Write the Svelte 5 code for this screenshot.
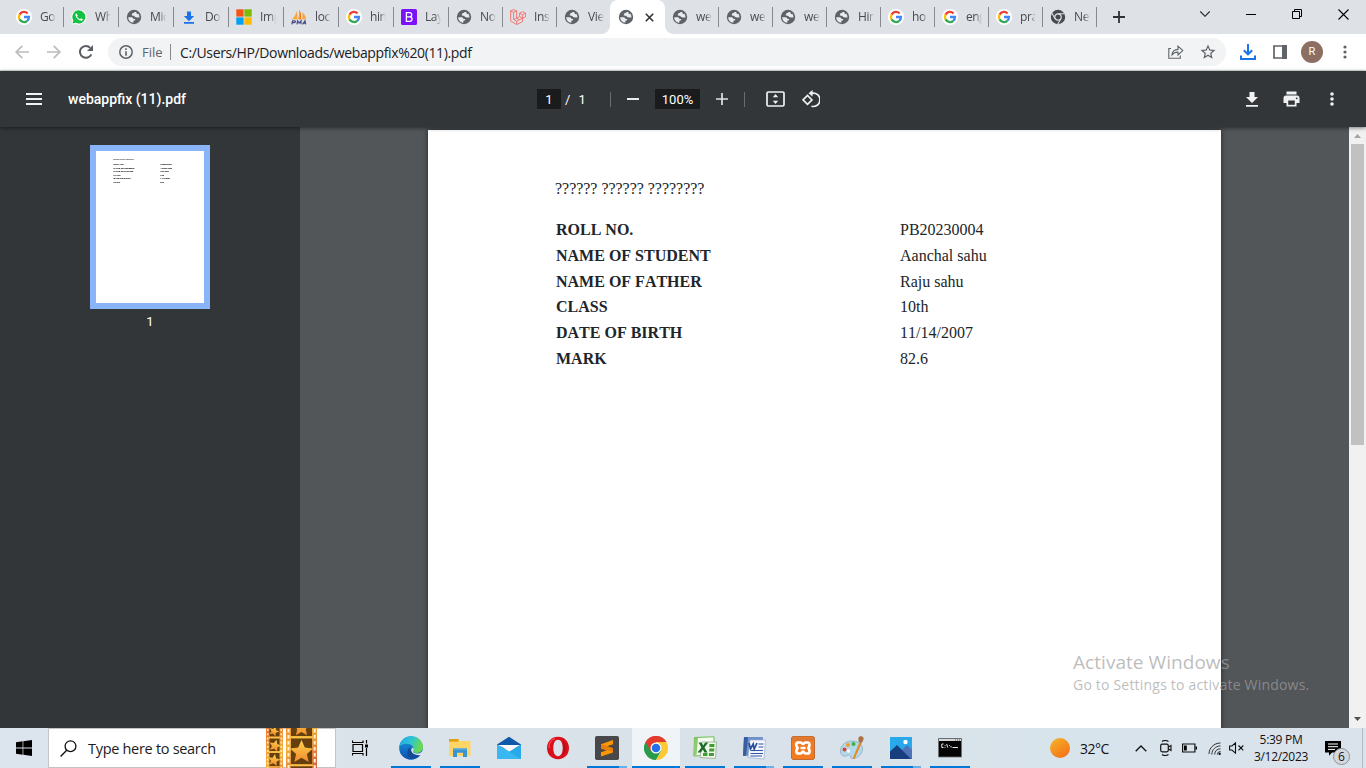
<script>
  const tabs = [
    { icon: 'google', label: 'Go', w: 55 },
    { icon: 'whatsapp', label: 'Wha', w: 55 },
    { icon: 'globe', label: 'Mic', w: 55 },
    { icon: 'download', label: 'Do', w: 55 },
    { icon: 'microsoft', label: 'Imp', w: 55 },
    { icon: 'pma', label: 'loc', w: 55 },
    { icon: 'google', label: 'hin', w: 55 },
    { icon: 'bootstrap', label: 'Lay', w: 55 },
    { icon: 'globe', label: 'No', w: 54 },
    { icon: 'laravel', label: 'Ins', w: 54 },
    { icon: 'globe', label: 'Vie', w: 54 },
    { icon: 'globe', label: '', w: 54, active: true },
    { icon: 'globe', label: 'we', w: 54 },
    { icon: 'globe', label: 'we', w: 54 },
    { icon: 'globe', label: 'we', w: 54 },
    { icon: 'globe', label: 'Hin', w: 54 },
    { icon: 'google', label: 'ho', w: 54 },
    { icon: 'google', label: 'eng', w: 54 },
    { icon: 'google', label: 'pra', w: 54 },
    { icon: 'chrome', label: 'Ne', w: 54 },
  ];
  const rows = [
    ['ROLL NO.', 'PB20230004'],
    ['NAME OF STUDENT', 'Aanchal sahu'],
    ['NAME OF FATHER', 'Raju sahu'],
    ['CLASS', '10th'],
    ['DATE OF BIRTH', '11/14/2007'],
    ['MARK', '82.6'],
  ];
  const apps = [
    { id: 'edge', bar: 1 },
    { id: 'explorer', bar: 1 },
    { id: 'mail', bar: 0 },
    { id: 'opera', bar: 0 },
    { id: 'sublime', bar: 2 },
    { id: 'chromeapp', bar: 1, active: true },
    { id: 'excel', bar: 1 },
    { id: 'word', bar: 2 },
    { id: 'xampp', bar: 1 },
    { id: 'paint', bar: 1 },
    { id: 'photos', bar: 2 },
    { id: 'cmd', bar: 1 },
  ];
</script>

{#snippet favicon(id)}
  <svg class="fav" viewBox="0 0 16 16">
    {#if id === 'google'}
      <circle cx="8" cy="8" r="8" fill="#fff" />
      <g fill="none" stroke-width="2.3">
        <path d="M3.55 5.6A5 5 0 0 1 11.6 4.5" stroke="#ea4335" />
        <path d="M3.55 5.6a5 5 0 0 0 0 4.8" stroke="#fbbc05" />
        <path d="M3.55 10.4a5 5 0 0 0 7.7 1.4" stroke="#34a853" />
        <path d="M8 8h5a5 5 0 0 1-1.75 3.8" stroke="#4285f4" />
      </g>
    {:else if id === 'whatsapp'}
      <path d="M8 .4a7.6 7.6 0 0 0-6.7 11.2L.4 15.8l4.3-1A7.6 7.6 0 1 0 8 .4z" fill="#fff" />
      <path d="M8 1.3a6.6 6.6 0 0 0-5.7 10l-.8 3.3 3.4-.8A6.6 6.6 0 1 0 8 1.3z" fill="#12c143" />
      <path d="M5.4 4.2c-.9.3-1.2 1.4-.8 2.5.9 2.4 2.7 4.2 4.9 4.9 1.2.3 2.3-.2 2.4-1.4l-1.9-1-.9 1C7.700 9.700 6.600 8.700 6 7.300l.8-.9z" fill="#fff" />
    {:else if id === 'globe'}
      <circle cx="8" cy="8" r="7.2" fill="#5f6368" />
      <path d="M2.200 8.300h3c1.200 0 2 .6 2.300 1.600h1.700c.1 1.100-.6 1.500-1.300 1.700-.6.200-.5 1.200-.6 2.200C4.400 13.600 2.200 11.200 2.200 8.300z" fill="#e8eaed" />
      <path d="M10.200 3.100H8.600c-.3.900-1 .9-1.700 1-.8.200-.5 1.200-1.200 1.700 0 .9.900 1 1.900 1 1.100 0 1.200 1.300 2.200 1.500 1.200.200 2.200.1 3.700.3a6 6 0 0 0-1.300-4.100c-.4.700-1.200.8-1.500 0z" fill="#e8eaed" />
    {:else if id === 'download'}
      <path d="M6 2.500h4V7h3.200L8 12.200 2.800 7H6zM3 13h10v1.700H3z" fill="#1a73e8" />
    {:else if id === 'microsoft'}
      <path d="M.3.300h7.300v7.300H.3z" fill="#f65314" /><path d="M8.400.300h7.300v7.300H8.400z" fill="#7cbb00" />
      <path d="M.3 8.400h7.300v7.300H.3z" fill="#00a1f1" /><path d="M8.400 8.400h7.300v7.300H8.400z" fill="#ffbb00" />
    {:else if id === 'pma'}
      <path d="M5.500 2C5.200 5 3.500 8 .8 10.200h5c.8-2.700.7-5.500-.3-8.200zM8 .8c2 3 2.600 6.300 1.800 9.400H7C8 7 8.300 4 8 .8zM11 3c2.300 2 3.700 4.500 4 7.200h-4C11.700 7.700 11.700 5.300 11 3z" fill="#f9a33a" />
      <path d="M8 .8c2 3 2.600 6.300 1.800 9.400H8.400C9.200 7 9 4 8 .8z" fill="#ef7a18" />
      <path d="M.8 15.300l.8-3.500h2c1.300 0 1.100 1.900-.3 1.900H1.400M6 15.300l.6-3.500 1.500 2.300 2-2.300-.2 3.500M11.500 15.300l2.500-3.500.7 3.500M12.300 14.200h2" stroke="#4a4b86" stroke-width="1.200" fill="none" />
    {:else if id === 'bootstrap'}
      <rect width="16" height="16" rx="1.500" fill="#7b12f8" />
      <path d="M5.400 3.700h3.300c2.600 0 2.700 3.900.1 4.100 3.100.1 2.900 4.500-.1 4.500H5.400zM5.400 7.800h3.400" stroke="#fff" stroke-width="1.300" fill="none" />
    {:else if id === 'laravel'}
      <path d="M.6 1.800l3-1.200 3 1.300v7.300l3-1.700V4.200l3-1.500 3 1.500v3.600l-3 1.500v3.300L6.700 15.500l-6-3.400zM.6 1.800l3 1.500v7.200l3 1.700 6-3M3.600 3.300l3-1.400M9.600 4.200l3 1.600 3-1.600M12.600 5.800v3.500l-3-1.800M6.600 9.200l-3 1.400M6.700 15.500v-3.300M6.600 9.200l3.200 1.500" stroke="#f8625b" stroke-width=".8" fill="none" />
    {:else if id === 'chrome'}
      <circle cx="8" cy="8" r="7.200" fill="#46494e" />
      <circle cx="8" cy="8" r="3.200" fill="#46494e" stroke="#dee1e6" stroke-width="1.200" />
      <path d="M8 4.700h6.300M5.100 9.700L2 4.300M10.900 9.700l-3.200 5.500" stroke="#dee1e6" stroke-width="1.100" />
    {/if}
  </svg>
{/snippet}

{#snippet appicon(id)}
  <svg class="app-icon" viewBox="0 0 24 24">
    {#if id === 'edge'}
      <defs>
        <linearGradient id="eg1" x1="0" y1="0" x2="1" y2=".3"><stop offset="0" stop-color="#20a5e2" /><stop offset=".5" stop-color="#2cc3d8" /><stop offset="1" stop-color="#6bd94f" /></linearGradient>
        <linearGradient id="eg2" x1="0" y1="0" x2="0" y2="1"><stop offset="0" stop-color="#1b9de0" /><stop offset="1" stop-color="#0a4fae" /></linearGradient>
      </defs>
      <circle cx="12" cy="12" r="11.800" fill="url(#eg2)" />
      <path d="M.5 10.500C1.500 4 6.500.2 12 .2c7 0 12 5 12 10.500 0 4-3 6.300-6.500 6.300-3 0-4.200-1-3.600-2.200 1.100-1.300 1-3.300-.2-4.600C10.800 7 4 7 .5 10.500z" fill="url(#eg1)" />
      <path d="M13.700 15c-.9 1.700 1.300 3.100 4.200 3 1.800-.1 3.400-.9 4.600-1.500l-.6 1.300C19 23 12 24 9.500 20.500 7 17 9 12.500 12 10.300c-2 3 .2 4.900 1.700 4.700z" fill="#134b96" />
      <path d="M14 11.500c1.500 1.500.5 3.200-.2 4 0 1.500 3 2.200 5 1.900 2.500-.3 4-1.400 5-3l.2 4c-3 1.600-8.700 1-10.900-1.800-1.500-2-1.100-4 .9-5.100z" fill="#dce5ec" />
    {:else if id === 'explorer'}
      <path d="M1 3h9.500l1.500 2H22.500v15H1z" fill="#ffd567" /><path d="M1 3h9.500v2.700H1z" fill="#dda113" />
      <path d="M5 21v-8.500h14V21h-4v-4.200H9V21z" fill="#3a94d2" /><path d="M5 12.500h14v1.500H5z" fill="#4faae4" />
    {:else if id === 'mail'}
      <path d="M0 8.500L12 .8l12 7.700v4H0z" fill="#0f5aa8" />
      <path d="M0 8.500l12 7.300 12-7.300V23H0z" fill="#27a9ea" /><path d="M0 23V8.500L24 23z" fill="#38b7f0" /><path d="M1 9h22L13 15z" fill="#fafafa" />
    {:else if id === 'opera'}
      <path fill-rule="evenodd" d="M12 .8C5.600.8 1 5.500 1 12s4.600 11.200 11 11.200S23 18.500 23 12 18.400.8 12 .8zm0 3c3 0 4.700 3.400 4.700 8.200S15 20.200 12 20.200 7.300 16.800 7.300 12 9 3.800 12 3.800z" fill="#d9101c" />
      <path d="M16 4.500c2.800 3 2.800 12 0 15 4.300-2.300 5-11.500 0-15z" fill="#ad0915" />
      <path d="M3 12c0-5 2.700-8.700 6-9.500" stroke="#ff3f48" stroke-width="1.500" fill="none" />
    {:else if id === 'sublime'}
      <rect width="24" height="24" rx="1.800" fill="#48484a" /><path d="M6 8.300L18 4v4.300l-12 4zM6 8.300l12 3.900v4.300L6 12.500zM6 16.300l12-4v4.200L6 20.600z" fill="#ff9800" /><path d="M6 8.300l12 3.900v3.500L6 12.300z" fill="#e87d08" />
    {:else if id === 'chromeapp'}
      <path d="M1.600 6l5.200 9L12 6h10.400A12 12 0 0 0 1.600 6z" fill="#e33b2e" /><path d="M12 12L1.600 6A12 12 0 0 0 12 24l5.200-9z" fill="#2a9a4b" /><path d="M12 12l5.200 3L12 24A12 12 0 0 0 22.400 6H12z" fill="#fcc934" />
      <path d="M1.600 6l5.200 9L12 6h10.400A12 12 0 0 0 1.600 6z" fill="#e33b2e" /><circle cx="12" cy="12" r="5.500" fill="#fff" /><circle cx="12" cy="12" r="4.300" fill="#2370e8" />
    {:else if id === 'excel'}
      <path d="M1.500 1.500L21 .800v18L.8 20z" fill="#f4faf1" stroke="#6fbf4c" /><path d="M9 6h14.500l-1 16.500L7 21.500z" fill="#eef6ea" stroke="#83a978" stroke-width=".7" />
      <path d="M16.500 8h5l-.2 3h-5zM16.300 12.500h5l-.2 3h-5zM16 17h5l-.2 3h-5zM10 17h4.500l-.2 3H10z" fill="#439b35" /><path d="M2 2l3 0-1.500 17H1z" fill="#8cca6c" />
      <path d="M5.500 6.500h3l1.700 2.900 2-2.900h3L11.500 11.500l3 5h-3l-1.600-3-2.200 3H4.500l4-5z" fill="#1b6c28" />
    {:else if id === 'word'}
      <path d="M2 1l19 0-2 19H1z" fill="#6f90c8" /><path d="M2 1l4 .2-2 18.500H1z" fill="#355d9f" /><path d="M8 4h15.500L22 23 6 21.500z" fill="#f5f7fc" stroke="#98add0" stroke-width=".7" />
      <path d="M16.500 8h5M16.500 11h4.800M9 14.500h12M8.500 17.500H21M8.300 20H20" stroke="#2d55a6" stroke-width="1.200" /><path d="M7 7l1.500 6 2.700-5 1 5L15 7" stroke="#254e9b" stroke-width="1.700" fill="none" />
    {:else if id === 'xampp'}
      <rect x=".4" y=".4" width="23.200" height="23.200" rx="2.500" fill="#f47a20" stroke="#bc662f" /><path d="M1 2h22v3H1z" fill="#c97643" opacity=".6" />
      <path d="M6.500 6.500h2.800c1.500 0 1.800 1.500 2.700 1.500s1.200-1.500 2.700-1.500h1.800c2.500 0 2.500 3.500.8 5.500 2 2 1.700 5.500-.8 5.500h-1.800c-1.500 0-1.800-1.800-2.700-1.800s-1.200 1.800-2.700 1.800H7.500C5 17.500 4.700 14 6.700 12 5 10 4.500 7.500 6.500 6.500z" fill="none" stroke="#fff" stroke-width="2.700" stroke-linejoin="round" /><path d="M9.500 12h5" stroke="#fff" stroke-width="2.400" />
    {:else if id === 'paint'}
      <path d="M12 5C5 5 0 10 .5 15.500.8 20 4.500 21 7 19.500c2-1.200 4 0 3.500 1.800C10 24 22 22.500 22.500 13 22.700 8 18 5 12 5z" fill="#b4d8ea" stroke="#82a7bd" stroke-width=".7" />
      <circle cx="4.500" cy="13.500" r="2" fill="#d8452f" /><circle cx="8" cy="9" r="2" fill="#f0a020" /><circle cx="13.500" cy="8" r="2" fill="#3faf45" /><circle cx="8.500" cy="15" r="1.700" fill="#f5f9fb" />
      <path d="M20 5l2 1.500L14.500 23l-2-.3z" fill="#e58a28" /><path d="M18.500 1.500c1-1.500 4.500-1.700 5 .5.5 2-1 4-2.500 5l-2.500-1.500z" fill="#a87347" />
    {:else if id === 'photos'}
      <path d="M1 1h22v22H1z" fill="#29a8ea" /><path d="M12 15l6-6 5 5v9H12z" fill="#4f72b8" /><path d="M1 15.500L8 9l14 14H1z" fill="#173f7e" /><circle cx="16.500" cy="6" r="2.200" fill="#fff" />
    {:else if id === 'cmd'}
      <path d="M.5 2.500h23v18.500H.5z" fill="#050505" stroke="#6d6f70" stroke-width=".8" /><path d="M1 3h22v2H1z" fill="#d4d6d7" /><path d="M17 4h1M19 4h1M21 4h1" stroke="#555" stroke-width="1.200" />
      <path d="M5.500 8H3.800v3.500h1.700M7 9v.8M7 11v.8M8.700 8l1 3.500M11.500 9v.8M13 10v1.500M14.500 11.500H20" stroke="#e8e8e8" fill="none" />
    {/if}
  </svg>
{/snippet}

{#snippet sheet()}
  <div class="sheet">
    <p class="heading">?????? ?????? ????????</p>
    <dl>
      {#each rows as [key, value]}
        <dt>{key}</dt>
        <dd>{value}</dd>
      {/each}
    </dl>
  </div>
{/snippet}

<div class="screen">
  <header class="tabstrip">
    {#each tabs as tab}
      <div class="tab" class:active={tab.active} style="width: {tab.w}px">
        {@render favicon(tab.icon)}
        {#if tab.active}
          <svg class="tab-close" viewBox="0 0 9 9"><path d="M.8.8l7.400 7.400M8.200.8L.8 8.200" stroke="#303236" stroke-width="1.600" /></svg>
        {:else}
          <span class="tab-label">{tab.label}</span>
        {/if}
      </div>
    {/each}
    <svg class="plus-tab" viewBox="0 0 12 12"><path d="M6 0v12M0 6h12" stroke="#303236" stroke-width="1.800" /></svg>
    <div class="window-controls">
      <svg width="10" height="6" viewBox="0 0 10 6"><path d="M.3.500L5 5.300 9.700.500" stroke="#222" stroke-width="1.100" fill="none" /></svg>
      <svg width="10" height="10" viewBox="0 0 10 10"><path d="M0 5.500h10" stroke="#000" /></svg>
      <svg width="10" height="10" viewBox="0 0 10 10"><path d="M.5 2.500h7v7h-7zM2.500 2.500v-2h7v7h-2" stroke="#000" fill="none" /></svg>
      <svg width="11" height="11" viewBox="0 0 11 11"><path d="M.5.500l10 10M10.500.500l-10 10" stroke="#000" stroke-width="1.100" /></svg>
    </div>
  </header>

  <nav class="navbar">
    <svg class="nav-back" viewBox="0 0 14 14"><path d="M14 7H1.200M7.300.800L1.200 7l6.100 6.200" stroke="#babcbe" stroke-width="1.700" fill="none" /></svg>
    <svg class="nav-fwd" viewBox="0 0 14 14"><path d="M0 7h12.800M6.700.800L12.800 7l-6.100 6.200" stroke="#babcbe" stroke-width="1.700" fill="none" /></svg>
    <svg class="nav-reload" viewBox="0 0 14 14"><path d="M12.300 9.300A5.900 5.900 0 1 1 11.200 2.900" stroke="#5a5d61" stroke-width="2" fill="none" /><path d="M14 0v6H8z" fill="#5a5d61" /></svg>
    <div class="omnibox">
      <svg class="info" viewBox="0 0 14 14"><circle cx="7" cy="7" r="6.200" stroke="#5f6368" stroke-width="1.500" fill="none" /><path d="M7 3.300v1.600M7 6.200v4.500" stroke="#5f6368" stroke-width="1.600" /></svg>
      <span class="scheme">File</span>
      <span class="rule"></span>
      <span class="url">C:/Users/HP/Downloads/webappfix%20(11).pdf</span>
      <svg class="share" viewBox="0 0 16 14"><path d="M3 3.500H.8v9.700h11.500V10.500M4 9.800c.3-3.500 2.500-5.200 6-5.400V1.200L14.800 5.600 10 10V7.100C7.500 7.100 5.500 7.800 4 9.800z" stroke="#5f6368" stroke-width="1.100" fill="none" /></svg>
      <svg class="star" viewBox="0 0 24 24"><path d="M22 9.240l-7.190-.620L12 2 9.190 8.630 2 9.240l5.460 4.730L5.820 21 12 17.270 18.180 21l-1.630-7.030L22 9.240zM12 15.400l-3.760 2.270 1-4.280-3.320-2.880 4.380-.380L12 6.100l1.710 4.040 4.380.380-3.320 2.880 1 4.280L12 15.400z" fill="#5f6368" /></svg>
    </div>
    <svg class="dl" viewBox="0 0 16 16"><path d="M8 0v10M3.800 6.200L8 10.300l4.200-4.100M1 11.500V15h14v-3.500" stroke="#1a73e8" stroke-width="2" fill="none" /></svg>
    <svg class="panel" viewBox="0 0 14 14"><path d="M1 1h12v12H1z" stroke="#5f6368" stroke-width="1.700" fill="none" /><path d="M9 0h5v14H9z" fill="#5f6368" /></svg>
    <span class="avatar">R</span>
    <svg class="menu-dots" viewBox="0 0 4 14"><g fill="#5f6368"><circle cx="2" cy="2" r="1.600" /><circle cx="2" cy="7" r="1.600" /><circle cx="2" cy="12" r="1.600" /></g></svg>
  </nav>

  <div class="pdfbar">
    <svg class="burger" viewBox="0 0 16 12"><path d="M0 1h16M0 6h16M0 11h16" stroke="#f1f1f1" stroke-width="2" /></svg>
    <span class="pdf-title">webappfix (11).pdf</span>
    <div class="pager">
      <span class="field page-field">1</span><span class="slash">/</span><span>1</span>
    </div>
    <span class="divider"></span>
    <svg class="minus" viewBox="0 0 12 12"><path d="M0 6h12" stroke="#e8eaed" stroke-width="2" /></svg>
    <span class="field zoom-field">100%</span>
    <svg class="plus" viewBox="0 0 12 12"><path d="M0 6h12M6 0v12" stroke="#e1e3e5" stroke-width="1.700" /></svg>
    <span class="divider second"></span>
    <svg class="fit" viewBox="0 0 19 16"><rect x="1" y="1" width="17" height="14" rx="1.300" stroke="#f1f1f1" stroke-width="1.700" fill="none" /><path d="M9.500 3l2.700 3.300H6.800zM9.500 13l2.700-3.300H6.800z" fill="#f1f1f1" /></svg>
    <svg class="rotate" viewBox="0 0 18 18"><path d="M1 9.900l4.500-4.500L10 9.900l-4.500 4.500z" stroke="#f1f1f1" stroke-width="1.600" fill="none" /><path d="M10 3.200a6.700 6.700 0 1 1-.6 13" stroke="#f1f1f1" stroke-width="1.700" fill="none" /><path d="M6.500 3.200L10.600 0v6.400z" fill="#f1f1f1" /></svg>
    <div class="pdf-actions">
      <svg width="12" height="15" viewBox="0 0 12 15"><path d="M3.500 0h5v5H12l-6 6-6-6h3.500zM0 13h12v1.700H0z" fill="#f1f1f1" /></svg>
      <svg width="17" height="16" viewBox="0 0 17 16"><path d="M3.500.500h10v3h-10zM3 4.500h11c1.500 0 2.500 1 2.500 2.500v5h-3v3.500h-10V12h-3V7C.5 5.500 1.500 4.500 3 4.500z" fill="#f1f1f1" /><path d="M5.200 9.500h6.600v4.300H5.200z" fill="#323639" /><circle cx="13.700" cy="7.300" r=".9" fill="#323639" /></svg>
      <svg width="4" height="14" viewBox="0 0 4 14"><g fill="#f1f1f1"><circle cx="2" cy="2" r="1.800" /><circle cx="2" cy="7" r="1.800" /><circle cx="2" cy="12" r="1.800" /></g></svg>
    </div>
  </div>

  <main class="viewer">
    <aside class="thumbs">
      <div class="thumb"><div class="mini">{@render sheet()}</div></div>
      <span class="thumb-no">1</span>
    </aside>
    <section class="canvas">{@render sheet()}</section>
    <div class="scrollbar">
      <svg width="7" height="4" viewBox="0 0 7 4"><path d="M0 4l3.500-4L7 4z" fill="#a3a3a3" /></svg>
      <div class="grip"></div>
      <svg width="7" height="4" viewBox="0 0 7 4"><path d="M0 0l3.500 4L7 0z" fill="#505050" /></svg>
    </div>
    <div class="watermark">
      <strong>Activate Windows</strong>
      <span>Go to Settings to activate Windows.</span>
    </div>
  </main>

  <footer class="taskbar">
    <div class="start"><svg width="16" height="16" viewBox="0 0 16 16"><path d="M0 2.200l6.600-.9v6.300H0zM7.300 1.200L16 0v7.600H7.300zM0 8.400h6.600v6.300L0 13.800zM7.300 8.400H16V16l-8.700-1.200z" /></svg></div>
    <div class="search">
      <svg class="lens" viewBox="0 0 17 17"><circle cx="10.500" cy="6.200" r="5.400" stroke="#111" stroke-width="1.300" fill="none" /><path d="M6.700 10.200L.6 16.400" stroke="#111" stroke-width="1.400" /></svg>
      <span>Type here to search</span>
      <svg class="film" viewBox="0 0 51 40">
        <defs>
          <linearGradient id="strip" x1="0" y1="0" x2="1" y2="1"><stop offset="0" stop-color="#e8732f" /><stop offset=".45" stop-color="#f3b13a" /><stop offset="1" stop-color="#d2603f" /></linearGradient>
          <linearGradient id="gold" x1="0" y1="0" x2="0" y2="1"><stop offset="0" stop-color="#ffd34f" /><stop offset="1" stop-color="#f08a2c" /></linearGradient>
          <path id="st" d="M0-10l2.900 6.600 7.100.700-5.300 4.800L6.200 9.200 0 5.500-6.200 9.200-4.700 2.100-10-2.700l7.100-.7z" />
        </defs>
        <path d="M0 0h17v40H0zM20 0h31v40H20z" fill="url(#strip)" />
        <path d="M3.500 0h10v8.500h-10zM3.500 10.500h10V23h-10zM3.500 25h10v13h-10zM25 0h21v8H25zM25 10.500h21V36H25zM25 38.500h21V40H25z" fill="#65400d" />
        <path d="M1.700 1v40M15.300 1v40" stroke="#fff1cf" stroke-width="1.500" stroke-dasharray="2 2.200" /><path d="M22.500 1v40M48.700 1v40" stroke="#fff1cf" stroke-width="2" stroke-dasharray="3.500 2.500" />
        <path d="M3 9.500h11M3 24h11M24 9.300h23M24 37.300h23" stroke="#f7c545" stroke-width="1.500" />
        <g fill="url(#gold)"><use href="#st" transform="translate(35.500 23.500) scale(1.150)" /><use href="#st" transform="translate(35.500 -1) scale(.9)" /><use href="#st" transform="translate(9 17.500) rotate(15) scale(.6)" /><use href="#st" transform="translate(8 32) rotate(10) scale(.6)" /><use href="#st" transform="translate(8 3) rotate(20) scale(.5)" /></g>
      </svg>
    </div>
    <div class="taskview"><svg width="17" height="16" viewBox="0 0 17 16"><path d="M1 4.500h9.500v7H1zM.5.500v2h10.500v-2M.5 15.500v-2h10.500v2M14.500 0v3.500M14.500 8v8" stroke="#000" stroke-width="1.200" fill="none" /><path d="M13 4.500h3v3h-3z" /></svg></div>
    <div class="apps">
      {#each apps as app}
        <div class="app" class:current={app.active}>
          {@render appicon(app.id)}
          {#if app.bar}<i class="bar" class:multi={app.bar === 2}></i>{/if}
        </div>
      {/each}
    </div>
    <div class="tray">
      <span class="sun"></span>
      <span class="temp">32°C</span>
      <svg class="t-up" viewBox="0 0 12 7"><path d="M.7 6.300L6 1l5.300 5.300" stroke="#111" stroke-width="1.300" fill="none" /></svg>
      <svg class="t-cam" viewBox="0 0 12 16"><rect x=".7" y="4.200" width="7.600" height="7.600" rx="1.500" stroke="#111" stroke-width="1.200" fill="none" /><path d="M8.500 7l2.500-1.500v5L8.500 9M2 1.500C3.500.400 6.500.400 8.500 1.500M2 14.500c1.500 1.100 4.500 1.100 6.500 0" stroke="#111" stroke-width="1.100" fill="none" /></svg>
      <svg class="t-bat" viewBox="0 0 15 10"><path d="M.6 1h12.300v8H.6z" stroke="#111" stroke-width="1.200" fill="none" /><path d="M2 2.500h2.800v5H2zM13.500 3.500H15v3h-1.500z" /></svg>
      <svg class="t-wifi" viewBox="0 0 13 13"><path d="M1 12C1 6 6 1 12.500 1M3.800 12.500c0-5 4-8.500 8.700-8.600M6.700 12.500c0-3.500 2.500-5.700 5.800-5.700M9.300 12.500c0-1.900 1.400-3 3.200-3" stroke="#333" stroke-width="1" fill="none" /><circle cx="11.600" cy="11.700" r="1.200" /></svg>
      <svg class="t-vol" viewBox="0 0 15 12"><path d="M.6 4h2.300L6.500.9v10.200L2.900 8H.6zM9.500 3.500l4.800 4.800M14.300 3.500L9.500 8.300" stroke="#111" stroke-width="1.100" fill="none" /></svg>
      <div class="clock"><span>5:39 PM</span><span>3/12/2023</span></div>
      <div class="notice">
        <svg width="16" height="15" viewBox="0 0 16 15"><path d="M0 0h16v11.500H7L4 14.700v-3.200H0z" /><path d="M3 3h10M3 5.700h10M3 8.400h7" stroke="#fff" stroke-width="1" /></svg>
        <b>6</b>
      </div>
    </div>
  </footer>
</div>

<style>
  :global(body) { margin: 0; overflow: hidden; }
  .screen { width: 1366px; height: 768px; display: flex; flex-direction: column; overflow: hidden; font-family: "Open Sans", sans-serif; }
  svg { display: block; flex: none; }

  .tabstrip { height: 34px; flex: none; display: flex; background: #dee1e6; padding-left: 9px; box-sizing: border-box; }
  .tab { position: relative; flex: none; height: 34px; display: flex; align-items: center; padding-left: 7px; box-sizing: border-box; }
  .tab:not(.active)::after { content: ""; position: absolute; right: 0; top: 7px; width: 1px; height: 20px; background: #878a8e; }
  .tab:has(+ .active)::after { display: none; }
  .tab.active { background: #fff; border-radius: 8px 8px 0 0; box-shadow: -1px 0 #fff; }
  .tab.active::before, .tab.active::after { content: ""; position: absolute; bottom: 0; width: 8px; height: 8px; }
  .tab.active::before { left: -9px; background: radial-gradient(circle at 0 0, transparent 7.500px, #fff 8px); }
  .tab.active::after { right: -8px; background: radial-gradient(circle at 100% 0, transparent 7.500px, #fff 8px); }
  .fav { width: 16px; height: 16px; }
  .tab-label { margin-left: 8px; width: 16px; overflow: hidden; white-space: nowrap; font-size: 12px; line-height: 18px; color: #484b50; letter-spacing: -.4px; mask-image: linear-gradient(90deg, #000 60%, transparent); }
  .tab-close { width: 9px; height: 9px; margin-left: 10.500px; }
  .plus-tab { width: 12px; height: 12px; margin: 11px 0 0 16px; }
  .window-controls { display: flex; margin: -6px 0 0 auto; padding-right: 17px; height: 40px; align-items: center; gap: 36px; }

  .navbar { height: 37px; flex: none; display: flex; align-items: center; box-sizing: border-box; border-bottom: 1px solid #dbe1e1; background: #fff; padding-left: 15px; }
  .nav-back, .nav-fwd, .nav-reload { width: 14px; height: 14px; }
  .nav-fwd { margin-left: 18px; }
  .nav-reload { margin-left: 18px; }
  .omnibox { margin-left: 15px; width: 1118px; height: 28px; border-radius: 14px; background: #f1f3f4; display: flex; align-items: center; box-sizing: border-box; padding: 0 9px 0 11px; font-size: 14px; color: #202124; }
  .info { width: 14px; height: 14px; }
  .scheme { margin-left: 9px; width: 21px; font-size: 13px; letter-spacing: 0; color: #5f6368; }
  .rule { width: 1px; height: 16px; background: #85888c; margin: 0 9px 0 7px; }
  .url { white-space: nowrap; font-size: 14px; letter-spacing: -.37px; }
  .share { width: 16px; height: 14px; margin-left: auto; }
  .star { width: 18px; height: 18px; margin-left: 15px; }
  .dl { width: 16px; height: 16px; margin-left: 14px; }
  .panel { width: 14px; height: 14px; margin-left: 17px; }
  .avatar { width: 22px; height: 22px; margin-left: 14px; border-radius: 50%; background: #8d6e63; color: #fff; font: 11px/22px Roboto, sans-serif; text-align: center; }
  .menu-dots { width: 4px; height: 14px; margin-left: 19.500px; }

  .pdfbar { position: relative; z-index: 2; height: 56px; flex: none; display: flex; align-items: center; background: #323639; color: #fff; box-sizing: border-box; padding: 0 32px 0 26px; font: 13px Roboto, sans-serif; box-shadow: 0 1px 4px rgba(0, 0, 0, .5); }
  .burger { width: 16px; height: 12px; }
  .pdf-title { margin-left: 26px; width: 469px; font-size: 14px; font-weight: 500; white-space: nowrap; }
  .field { height: 20px; line-height: 21px; background: #191b1c; text-align: center; }
  .pager { display: flex; align-items: center; width: 73px; }
  .page-field { width: 24px; }
  .slash { margin: 0 8px 0 4px; }
  .divider { width: 1px; height: 15px; background: #6a6d70; }
  .minus { width: 12px; height: 12px; margin: 0 16px; }
  .zoom-field { width: 45px; }
  .plus { width: 12px; height: 12px; margin: 0 16px; }
  .fit { width: 19px; height: 16px; margin-left: 20.500px; }
  .rotate { width: 18px; height: 18px; margin-left: 17px; margin-top: -1px; }
  .pdf-actions { display: flex; align-items: center; margin-left: auto; gap: 27px; }
  .pdf-actions svg:nth-child(2) { margin-left: -2px; }
  .pdf-actions svg:nth-child(3) { margin-left: 3px; }

  .viewer { position: relative; flex: 1; min-height: 0; display: flex; background: #525659; }
  .thumbs { width: 300px; flex: none; background: #323639; display: flex; flex-direction: column; align-items: center; padding-top: 18px; box-sizing: border-box; }
  .thumb { width: 108px; height: 152px; border: 6px solid #8ab4f8; background: #fff; overflow: hidden; }
  .mini { width: 793px; height: 1116px; transform: scale(.1362); transform-origin: 0 0; -webkit-text-stroke: .7px #212529; }
  .thumb-no { margin-top: 5px; font: 13px/16px Roboto, sans-serif; color: #fff; }
  .canvas { flex: 1; padding: 3px 0 0 128px; overflow: hidden; }
  .canvas .sheet { box-shadow: 0 0 5px rgba(0, 0, 0, .6); }
  .sheet { width: 793px; height: 1116px; background: #fff; box-sizing: border-box; padding: 49px 0 0 127px; font: 16px "Liberation Serif", serif; color: #212529; }
  .heading { margin: 0 0 18px; line-height: 20px; letter-spacing: -.03px; }
  dl { margin: 0; display: grid; grid-template-columns: 344px 1fr; grid-auto-rows: 25.800px; padding-left: 1px; font-kerning: none; }
  dt, dd { margin: 0; line-height: 26px; white-space: nowrap; }
  dt { font-weight: bold; }
  .scrollbar { width: 17px; flex: none; background: #f1f1f1; display: flex; flex-direction: column; align-items: center; padding: 7px 0 7px; box-sizing: border-box; }
  .grip { width: 13px; height: 301px; background: #c1c1c1; margin: 6px 0 auto; }
  .watermark { position: absolute; left: 1073px; top: 522px; display: flex; flex-direction: column; color: rgba(160, 160, 160, .7); white-space: nowrap; }
  .watermark strong { font-size: 19px; font-weight: 400; line-height: 26px; letter-spacing: .05px; }
  .watermark span { font-size: 14px; line-height: 20px; letter-spacing: .2px; }

  .taskbar { height: 40px; flex: none; display: flex; background: linear-gradient(90deg, #dce4ed, #d9e1e9 50%, #d8e4eb 80%, #dae2ec); }
  .start { width: 48px; display: flex; align-items: center; justify-content: center; }
  .search { width: 288px; box-sizing: border-box; border: 1px solid #c3c4c5; background: #fff; display: flex; align-items: center; padding: 0 18px 0 11px; color: #1b1b1b; font-size: 14.500px; white-space: nowrap; }
  .lens { width: 17px; height: 17px; margin-right: 11px; }
  .search span { letter-spacing: -.3px; }
  .film { width: 51px; height: 40px; margin-left: auto; }
  .taskview { width: 49px; display: flex; align-items: center; justify-content: center; }
  .apps { display: flex; gap: 1px; margin-left: 2px; }
  .app { position: relative; width: 48px; display: flex; align-items: center; justify-content: center; }
  .app.current { background: #f0f4f7; }
  .app-icon { width: 24px; height: 24px; }
  .bar { position: absolute; left: 4px; right: 4px; bottom: 0; height: 2px; background: #0078d7; }
  .bar.multi { background: linear-gradient(90deg, #0078d7 80%, #68aee8 80%); }
  .current .bar { left: 0; right: 0; }
  .tray { margin-left: auto; display: flex; align-items: center; width: 316px; font-size: 12px; color: #111; }
  .sun { width: 20px; height: 20px; border-radius: 50%; background: linear-gradient(145deg, #f8b62c, #f26a13); }
  .temp { margin-left: 10px; width: 30px; font-size: 14px; letter-spacing: -.5px; white-space: nowrap; }
  .t-up { width: 12px; height: 7px; margin-left: 25px; }
  .t-cam { width: 12px; height: 16px; margin-left: 13px; }
  .t-bat { width: 15px; height: 10px; margin-left: 10px; }
  .t-wifi { width: 13px; height: 13px; margin-left: 11px; }
  .t-vol { width: 15px; height: 12px; margin-left: 8px; }
  .clock { width: 60px; margin-left: 7px; display: flex; flex-direction: column; align-items: center; line-height: 17.500px; letter-spacing: -.3px; white-space: nowrap; }
  .notice { position: relative; margin-left: 14px; }
  .notice::after { content: ""; position: absolute; left: 37px; top: -13px; width: 1px; height: 40px; background: #b3bac1; }
  .notice b { position: absolute; left: 8px; top: 7px; width: 15px; height: 15px; border: 1px solid #8c8f93; border-radius: 50%; background: #d5d9de; font-weight: 400; font-size: 12px; line-height: 15px; text-align: center; }
</style>
